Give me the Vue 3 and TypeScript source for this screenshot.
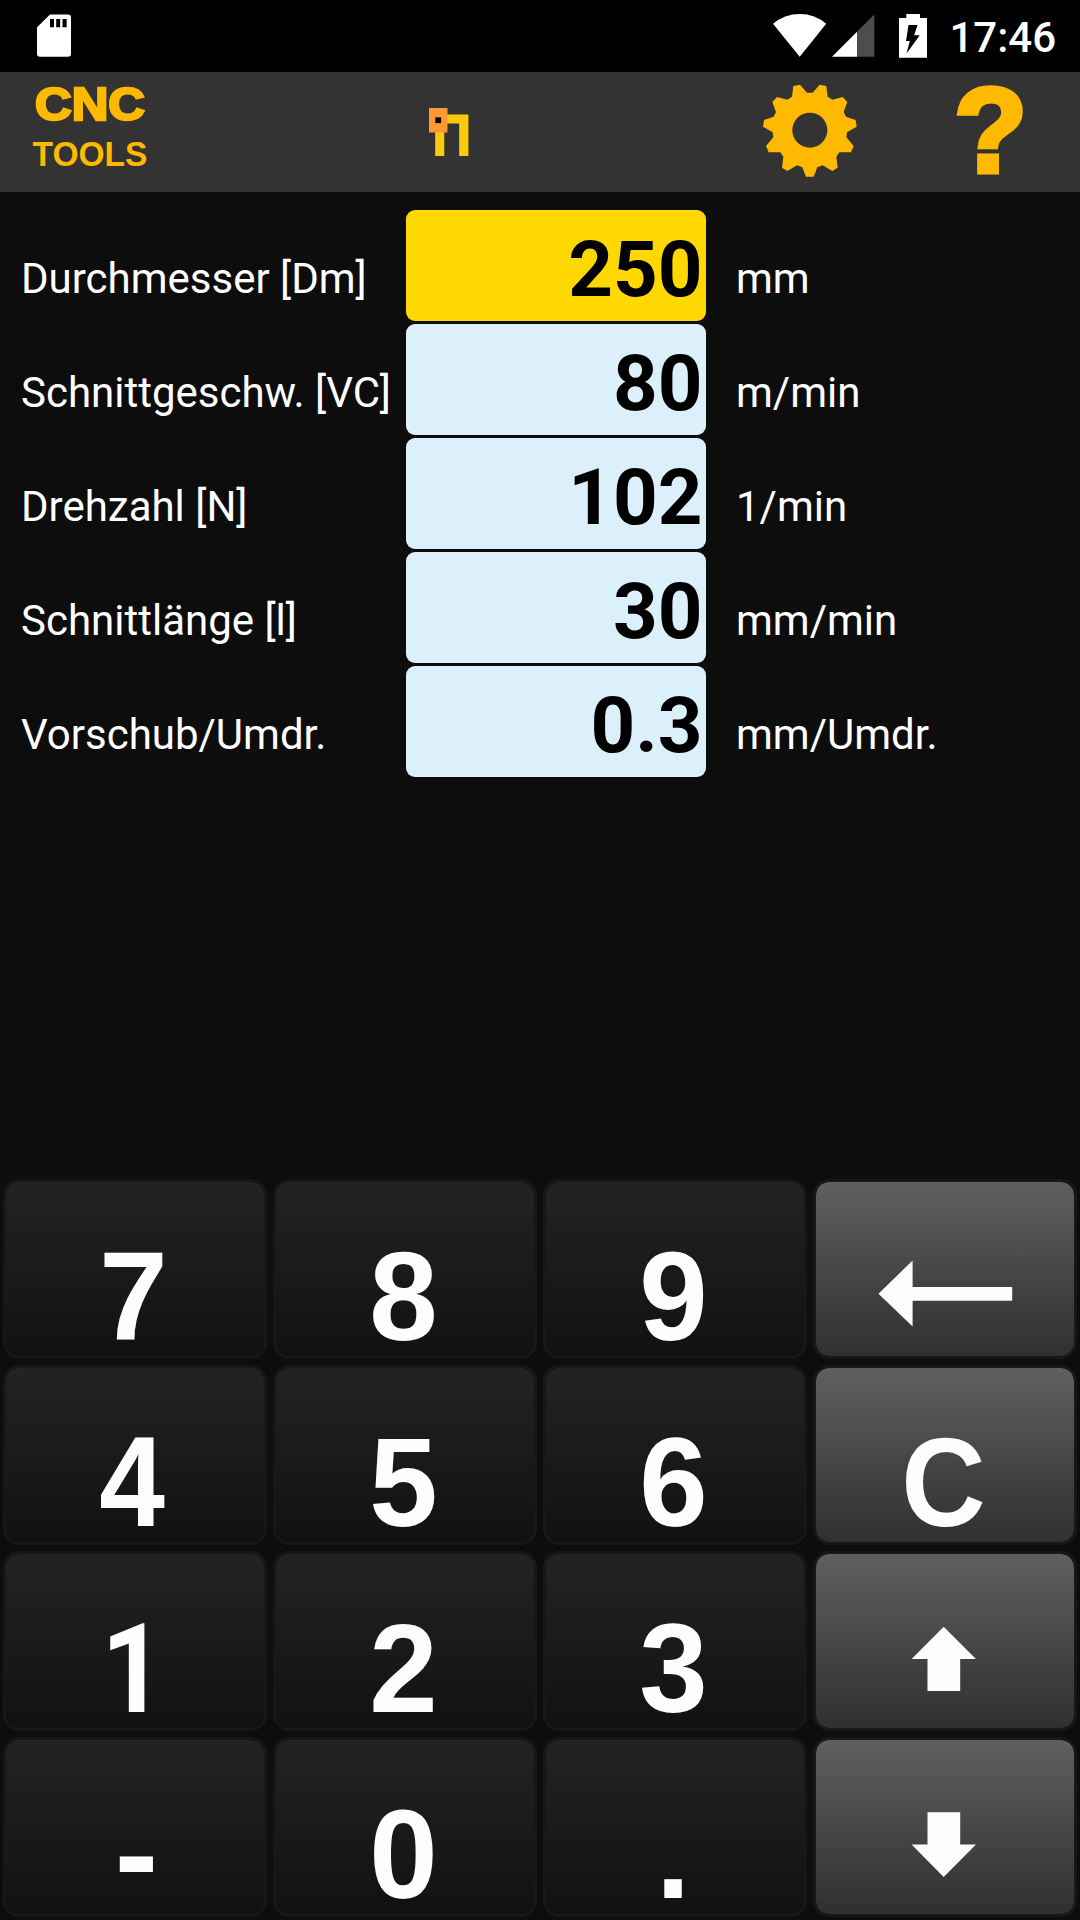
<script setup lang="ts">
import { ref } from 'vue'

interface Field {
  label: string
  value: string
  unit: string
}

interface Key {
  label: string
  name?: string
  icon?: string
  control?: boolean
}

const fields: Field[] = [
  { label: 'Durchmesser [Dm]', value: '250', unit: 'mm' },
  { label: 'Schnittgeschw. [VC]', value: '80', unit: 'm/min' },
  { label: 'Drehzahl [N]', value: '102', unit: '1/min' },
  { label: 'Schnittlänge [l]', value: '30', unit: 'mm/min' },
  { label: 'Vorschub/Umdr.', value: '0.3', unit: 'mm/Umdr.' },
]

const active = ref(0)

const keys: Key[] = [
  { label: '7' },
  { label: '8' },
  { label: '9' },
  { label: 'back', control: true, icon: '62.5,111.7 96.6,78.5 96.6,105 196.2,105 196.2,118.8 96.6,118.8 96.6,144.5' },
  { label: '4', name: 'four' },
  { label: '5' },
  { label: '6' },
  { label: 'C', name: 'clear', control: true },
  { label: '1', name: 'one' },
  { label: '2' },
  { label: '3' },
  { label: 'up', control: true, icon: '127.7,72.7 160,105 144.2,105 144.2,137 111.5,137 111.5,105 95.6,105' },
  { label: '-', name: 'minus' },
  { label: '0' },
  { label: '.', name: 'dot' },
  { label: 'down', control: true, icon: '111.5,72.3 144.2,72.3 144.2,104.5 160,104.5 127.7,137 95.6,104.5 111.5,104.5' },
]
</script>

<template>
  <div class="screen">
    <div class="status">
      <svg class="sd" width="34" height="43" viewBox="0 0 34 43">
        <path fill="#fff" fill-rule="evenodd" d="M13 .5H31Q34 .5 34 3.5V39.5Q34 42.8 31 42.8H3Q0 42.8 0 39.5V13.3ZM13 5V13.3H17V5ZM19.2 5V13.3H23.2V5ZM25.5 5V13.3H29.7V5Z" />
      </svg>
      <div class="status-right">
        <svg class="wifi" width="54" height="43" viewBox="0 0 54 43">
          <path fill="#fff" d="M0 9.8Q11.5 0 26.7 0T53.2 9.8L26.7 42.8Z" />
        </svg>
        <svg class="signal" width="43" height="43" viewBox="0 0 43 43">
          <path fill="#4d4d4d" d="M42.3 .5V42.8H25V17.8Z" />
          <path fill="#fff" d="M0 42.8L25 17.8V42.8Z" />
        </svg>
        <svg class="battery" width="28" height="44" viewBox="0 0 28 44">
          <path fill="#fff" d="M7.3 0H21V4H28V43.7H0V4H7.3Z" />
          <path fill="#000" d="M9.5 11H18.5L15.2 21.3H20.8L7.5 39.5L10.8 27H7Z" />
        </svg>
        <span class="time">17:46</span>
      </div>
    </div>

    <header class="bar">
      <svg class="logo" width="160" height="120" viewBox="0 0 160 120">
        <text class="cnc" x="35" y="48" textLength="110" lengthAdjust="spacingAndGlyphs">CNC</text>
        <text class="tools" x="32.5" y="94" textLength="115" lengthAdjust="spacingAndGlyphs">TOOLS</text>
      </svg>
      <svg class="tool" width="40" height="48" viewBox="0 0 40 48">
        <path fill="#ffc90e" d="M6.2 24H15.3V48H6.2ZM18 6.5H39.4V48H30.2V15.5H18Z" />
        <rect x="0" y="0" width="18.5" height="24.5" fill="#ff9a33" />
        <rect x="6.3" y="9.3" width="5.8" height="5.8" fill="#000" />
      </svg>
      <svg class="gear" width="100" height="100" viewBox="60 240 300 300">
        <polygon fill="#ffb900" points="218,278 239,254 259,258 263,290 277,299 308,291 322,306 311,336 318,350 347,360 350,380 321,397 319,412 341,438 333,457 298,457 289,470 293,503 277,513 248,496 232,502 221,530 198,530 187,502 171,496 142,513 126,503 130,470 121,457 86,457 78,438 100,412 98,397 69,380 72,360 101,350 108,336 97,306 111,291 142,299 156,290 160,258 180,254 201,278" />
        <circle cx="209.5" cy="390.5" r="52.5" fill="#333" />
      </svg>
      <svg class="help" width="90" height="120" viewBox="0 0 90 120">
        <text transform="translate(4 99.5) scale(0.99 0.99)" x="0" y="0">?</text>
      </svg>
    </header>

    <main class="form">
      <div v-for="(f, i) in fields" :key="f.label" class="row" @click="active = i">
        <span class="label">{{ f.label }}</span>
        <span class="value" :class="{ active: i === active }">{{ f.value }}</span>
        <span class="unit">{{ f.unit }}</span>
      </div>
    </main>

    <div class="pad">
      <button v-for="k in keys" :key="k.label" type="button" class="key" :class="{ control: k.control }" :aria-label="k.label">
        <svg v-if="k.icon" width="258" height="174" viewBox="0 0 258 174">
          <polygon :points="k.icon" fill="#fdfdfd" />
        </svg>
        <span v-else class="cap" :class="k.name">{{ k.label }}</span>
      </button>
    </div>
  </div>
</template>

<style>
body {
  background: #0c0c0c;
}
</style>

<style scoped>
.screen {
  display: flex;
  flex-direction: column;
  width: 1080px;
  height: 1920px;
  overflow: hidden;
  background: #0d0d0d;
  color: #fff;
  font-family: Roboto, sans-serif;
}

.status {
  display: flex;
  justify-content: space-between;
  height: 72px;
  flex: none;
  background: #000;
}

.sd {
  margin: 14px 0 0 37px;
}

.status-right {
  display: flex;
  padding: 14px 24px 0 0;
}

.signal {
  margin-left: 5px;
}

.battery {
  margin-left: 24px;
}

.time {
  margin-left: 22px;
  font-size: 42px;
  font-weight: 500;
  line-height: 48px;
}

.bar {
  display: flex;
  height: 120px;
  flex: none;
  background: #333;
}

.bar text {
  font-family: "Liberation Sans", Arial, sans-serif;
  font-weight: 700;
  fill: #ffb900;
}

.cnc {
  font-size: 47px;
  stroke: #ffb900;
  stroke-width: 2.5px;
}

.bar .tools {
  font-size: 35px;
}

.tool {
  margin: 36px 0 0 269px;
}

.gear {
  margin: 8px 0 0 291px;
}

.help {
  margin-left: 90px;
  overflow: visible;
}

.help text {
  font-size: 121px;
  stroke: #ffb900;
  stroke-width: 5px;
}

.form {
  display: flex;
  flex-direction: column;
  gap: 3px;
  padding-top: 18px;
}

.row {
  display: flex;
  height: 111px;
  font-size: 42px;
  line-height: 50px;
  white-space: nowrap;
}

.label {
  box-sizing: border-box;
  width: 406px;
  padding: 44px 0 0 21px;
}

.value {
  box-sizing: border-box;
  width: 300px;
  height: 111px;
  padding: 4px 3.5px 0 0;
  border-radius: 9px;
  background: #dcf0fc;
  color: #000;
  font-size: 78px;
  font-weight: 700;
  line-height: 111px;
  text-align: right;
}

.value.active {
  background: #ffd802;
}

.unit {
  padding: 44px 0 0 30px;
}

.pad {
  display: grid;
  grid-template-columns: repeat(4, 264px);
  grid-auto-rows: 180px;
  gap: 6px;
  margin-top: auto;
  padding: 3px;
}

.key {
  display: flex;
  justify-content: center;
  align-items: flex-start;
  box-sizing: border-box;
  padding: 0;
  border: 3px solid #171717;
  border-radius: 16px;
  background: linear-gradient(#232323, #1a1a1a 50%, #111) padding-box;
  color: #fdfdfd;
}

.key.control {
  background: linear-gradient(#5f5f5d, #4d4d4b 40%, #474747 50%, #303030) padding-box;
}

.cap {
  margin: 52px 3px 0 0;
  font-family: "Liberation Sans", Arial, sans-serif;
  font-size: 123px;
  font-weight: 700;
  line-height: 128px;
  transform: scaleY(1.02);
  transform-origin: 50% 107px;
}

/* Plain "1" without a foot */
.cap.one {
  margin: 52px 4px 0 0;
  font-family: Roboto, sans-serif;
  font-size: 125px;
  transform: scaleX(0.88);
}

.cap.four {
  margin-right: 5px;
  transform: scale(0.96, 1.04);
}

.cap.clear {
  margin-right: 4px;
  transform: scale(0.95, 1.03);
}

.cap.minus {
  margin: 52px 0 0 3px;
  transform: scale(1.06, 1.06);
}

.cap.dot {
  margin-right: 4px;
}
</style>
